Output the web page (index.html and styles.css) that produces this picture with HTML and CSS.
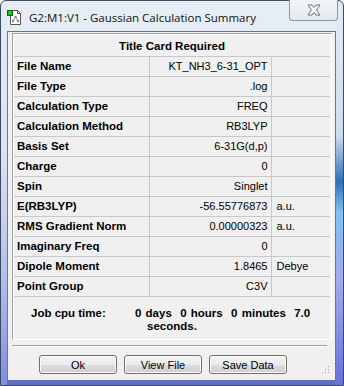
FILE: index.html
```html
<!DOCTYPE html>
<html>
<head>
<meta charset="utf-8">
<link rel="stylesheet" href="styles.css">
</head>
<body>
<div class="window">
  <div class="titlebar">
    <svg class="app-icon" width="16" height="16" viewBox="0 0 16 16">
      <path d="M3.5 1.5 H10.5 L13.5 4.5 V15.5 H3.5 Z" fill="#fff" stroke="#555" stroke-width="1"/>
      <path d="M10.5 1.5 V4.5 H13.5" fill="none" stroke="#555" stroke-width="1"/>
      <rect x="0.5" y="1.5" width="5" height="5" fill="#22c022" stroke="#116611"/>
      <circle cx="8.5" cy="8" r="1.2" fill="#888"/>
      <circle cx="6" cy="12" r="1.2" fill="#888"/>
      <circle cx="11" cy="12" r="1.2" fill="#888"/>
      <path d="M8.5 8 L6 12 M8.5 8 L11 12" stroke="#888" stroke-width="1"/>
    </svg>
    <span class="title-text">G2:M1:V1 - Gaussian Calculation Summary</span>
    <div class="close-btn">
      <svg width="16" height="12" viewBox="0 0 16 12">
        <path d="M2 1 H6 L8 3.5 L10 1 H14 L10.5 6 L14 11 H10 L8 8.5 L6 11 H2 L5.5 6 Z" fill="#fff" stroke="#6d6d6d" stroke-width="1" stroke-linejoin="round"/>
      </svg>
    </div>
  </div>
  <div class="client">
    <div class="panel">
      <table class="summary">
        <colgroup><col class="c1"><col class="c2"><col class="c3"></colgroup>
        <tr><th colspan="3" class="head">Title Card Required</th></tr>
        <tr><th>File Name</th><td class="val">KT_NH3_6-31_OPT</td><td class="unit"></td></tr>
        <tr><th>File Type</th><td class="val">.log</td><td class="unit"></td></tr>
        <tr><th>Calculation Type</th><td class="val">FREQ</td><td class="unit"></td></tr>
        <tr><th>Calculation Method</th><td class="val">RB3LYP</td><td class="unit"></td></tr>
        <tr><th>Basis Set</th><td class="val">6-31G(d,p)</td><td class="unit"></td></tr>
        <tr><th>Charge</th><td class="val">0</td><td class="unit"></td></tr>
        <tr><th>Spin</th><td class="val">Singlet</td><td class="unit"></td></tr>
        <tr><th>E(RB3LYP)</th><td class="val">-56.55776873</td><td class="unit">a.u.</td></tr>
        <tr><th>RMS Gradient Norm</th><td class="val">0.00000323</td><td class="unit">a.u.</td></tr>
        <tr><th>Imaginary Freq</th><td class="val">0</td><td class="unit"></td></tr>
        <tr><th>Dipole Moment</th><td class="val">1.8465</td><td class="unit">Debye</td></tr>
        <tr><th>Point Group</th><td class="val">C3V</td><td class="unit"></td></tr>
      </table>
      <div class="cpu">
        <div class="cpu-label">Job cpu time:</div>
        <div class="cpu-value">
          <div>0 days&nbsp; 0 hours&nbsp; 0 minutes&nbsp; 7.0</div>
          <div class="cpu-line2">seconds.</div>
        </div>
      </div>
    </div>
    <div class="separator"></div>
    <div class="buttons">
      <button class="btn">Ok</button>
      <button class="btn">View File</button>
      <button class="btn">Save Data</button>
    </div>
    <div class="grip">
      <svg width="8" height="8" viewBox="0 0 8 8">
        <rect x="6" y="0" width="1" height="1" fill="#a0a0a0"/>
        <rect x="6" y="3" width="1" height="1" fill="#a0a0a0"/>
        <rect x="3" y="3" width="1" height="1" fill="#a0a0a0"/>
        <rect x="6" y="6" width="1" height="1" fill="#a0a0a0"/>
        <rect x="3" y="6" width="1" height="1" fill="#a0a0a0"/>
        <rect x="0" y="6" width="1" height="1" fill="#a0a0a0"/>
      </svg>
    </div>
  </div>
</div>
</body>
</html>
```
FILE: styles.css
```css
* { box-sizing: border-box; }
html, body { margin: 0; padding: 0; }
body {
  width: 344px;
  height: 386px;
  overflow: hidden;
  background: #fff;
  font-family: "Liberation Sans", Arial, sans-serif;
}
.window {
  width: 344px;
  height: 386px;
  border: 1px solid #3c4a66;
  border-radius: 6px 6px 0 0;
  background:
    linear-gradient(to bottom, #e4ebf2 0%, #dbe3f0 40%, #b6c1ea 70%, #7f8fe0 100%) left top / 6px 100% no-repeat,
    linear-gradient(to bottom, #e4ebf2 0%, #cfdcee 35%, #2f6fb8 47%, #7ec0f4 55%, #a3acec 72%, #6672da 100%) right top / 8px 100% no-repeat,
    linear-gradient(to bottom, #e6edf4 0%, #e0e8f0 70%, #c4cff0 90%, #5866c8 100%);
  display: flex;
  flex-direction: column;
  position: relative;
}
.titlebar {
  height: 30px;
  flex: none;
  display: flex;
  align-items: center;
  padding-left: 6px;
  position: relative;
}
.app-icon { margin-top: 2px; }
.title-text {
  margin-left: 6px;
  margin-top: 2px;
  font-family: "Open Sans", "Noto Sans", sans-serif;
  font-size: 11.5px;
  color: #111;
}
.close-btn {
  position: absolute;
  top: -1px;
  right: 5px;
  width: 49px;
  height: 21px;
  border: 1px solid #8d98a6;
  border-top: none;
  border-radius: 0 0 4px 4px;
  background: linear-gradient(to bottom, #f1f5f8, #e4eaf0);
  display: flex;
  align-items: center;
  justify-content: center;
}
.client {
  margin: 0 7px 4px 6px;
  flex: 1;
  background: #f0f0f0;
  border: 1px solid #6c7788;
  position: relative;
  padding: 1px 3px 0 4px;
}
.panel {
  border: 1px solid #a0a0a0;
  border-right-color: #fff;
  border-bottom-color: #fff;
  box-shadow: inset 1px 1px 0 #fff;
  height: 307px;
  padding: 2px 0 0 1px;
}
.summary {
  border-collapse: collapse;
  width: 316px;
  table-layout: fixed;
  font-size: 11px;
  color: #000;
}
.summary col.c1 { width: 135px; }
.summary col.c2 { width: 122px; }
.summary col.c3 { width: 59px; }
.summary th, .summary td {
  height: 20px;
  padding: 0 3px;
  border: 1px solid #c8c8c8;
  white-space: nowrap;
  overflow: hidden;
}
.summary th {
  text-align: left;
  font-weight: bold;
  font-size: 11.5px;
}
.summary th.head {
  text-align: center;
  border-top: none;
  border-left: none;
  border-right: none;
}
.summary td.val { text-align: right; }
.summary td.unit { text-align: left; padding-left: 5px; border-right: none; }
.summary tr th:first-child { border-left: none; }
.cpu {
  display: flex;
  padding-top: 10px;
  font-size: 11.5px;
  font-weight: bold;
  line-height: 13px;
}
.cpu-label { width: 121px; padding-left: 17px; flex: none; }
.cpu-value { white-space: nowrap; word-spacing: 1px; }
.cpu-line2 { padding-left: 12px; }
.separator {
  margin-top: 5px;
  margin-right: 5px;
  height: 2px;
  border-top: 1px solid #a0a0a0;
  border-bottom: 1px solid #fff;
}
.buttons {
  display: flex;
  gap: 7px;
  padding-left: 27px;
  margin-top: 8px;
}
.btn {
  width: 78px;
  height: 19px;
  border: 1px solid #707070;
  border-radius: 3px;
  background: linear-gradient(to bottom, #f2f2f2 0%, #ebebeb 50%, #dddddd 51%, #cfcfcf 100%);
  box-shadow: inset 0 0 0 1px #fcfcfc;
  font-family: "Liberation Sans", Arial, sans-serif;
  font-size: 11px;
  color: #000;
  padding: 0;
}
.grip {
  position: absolute;
  right: 5px;
  bottom: 6px;
  width: 8px;
  height: 8px;
  line-height: 0;
}
```
